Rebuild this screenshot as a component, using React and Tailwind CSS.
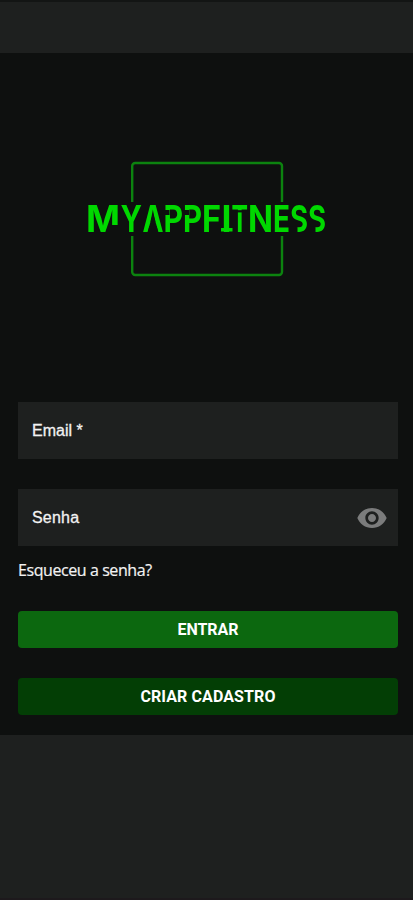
import React, { useState } from 'react';
import { MdVisibility } from 'react-icons/md';

// left edge and advance of every letter in the wordmark
const letters = [
  { char: 'M', x: 86, width: 34 },
  { char: 'Y', x: 120.5, width: 21.5 },
  { char: 'A', x: 142.5, width: 21 },
  { char: 'P', x: 163.5, width: 19.5 },
  { char: 'P', x: 183, width: 19 },
  { char: 'F', x: 202, width: 19 },
  { char: 'I', x: 221.5, width: 10 },
  { char: 'T', x: 231.5, width: 16.5 },
  { char: 'N', x: 248, width: 25 },
  { char: 'E', x: 273, width: 17 },
  { char: 'S', x: 290, width: 18 },
  { char: 'S', x: 308, width: 18 },
];

const Logo = () => (
  <svg width="250" height="116" viewBox="82 161 250 116" role="img" aria-label="MyAppFitness">
    <mask id="stencil" maskUnits="userSpaceOnUse" x="80" y="190" width="260" height="60">
      <rect x="80" y="190" width="260" height="60" fill="white" />
      <g fill="black">
        <path d="M112 225h8v9h-8z" />
        <path d="M153 213l-5.7 20h11.4z" />
        <path d="M163 210h6.5v5h-6.5z" />
        <path d="M182.5 210h6.5v5h-6.5z" />
        <path d="M233 210.2h15v2.2h-15z" />
        <path d="M289.5 221.5h8v12h-8z" />
        <path d="M307.5 221.5h8v12h-8z" />
      </g>
    </mask>
    <g fill="none" stroke="#0c830f" strokeWidth="2.4">
      <path d="M132.2 202V166a3 3 0 0 1 3-3H279a3 3 0 0 1 3 3V202" />
      <path d="M132.2 236V272a3 3 0 0 0 3 3H279a3 3 0 0 0 3-3V236" />
    </g>
    <g mask="url(#stencil)" fill="#00d800">
      <text y="231.5" className="font-['Inter',sans-serif] text-[37px] font-bold">
        {letters.map(({ char, x, width }, i) => (
          <tspan key={i} x={x} textLength={width} lengthAdjust="spacingAndGlyphs">{char}</tspan>
        ))}
      </text>
      <rect x="221" y="228" width="11.5" height="3.5" />
    </g>
  </svg>
);

const Login = () => {
  const [email, setEmail] = useState('');
  const [password, setPassword] = useState('');
  const [showPassword, setShowPassword] = useState(false);

  return (
    <main className="h-[682px] bg-[#0e100f] pl-[18px] pr-[15px] pt-[108px]">
      <div className="flex justify-center h-[241px] pr-[2px]">
        <Logo />
      </div>

      <form onSubmit={(e) => e.preventDefault()}>
        <input
          type="email"
          aria-label="Email"
          value={email}
          onChange={(e) => setEmail(e.target.value)}
          placeholder="Email *"
          className="block w-full h-[57px] px-[14px] bg-[#1e201f] text-base text-[#f2f2f2] placeholder:text-[#f2f2f2] [-webkit-text-stroke:0.3px_#f2f2f2] outline-none"
        />

        <div className="mt-[30px] h-[57px] flex items-center bg-[#1e201f] pr-[10px]">
          <input
            type={showPassword ? 'text' : 'password'}
            aria-label="Senha"
            value={password}
            onChange={(e) => setPassword(e.target.value)}
            placeholder="Senha"
            className="flex-1 min-w-0 h-full px-[14px] text-base tracking-[0.2px] text-[#f2f2f2] placeholder:text-[#f2f2f2] [-webkit-text-stroke:0.3px_#f2f2f2] outline-none"
          />
          <button type="button" aria-label="Mostrar senha" onClick={() => setShowPassword(!showPassword)}>
            <MdVisibility size={32} className="text-[#7b7c7c]" />
          </button>
        </div>

        <a href="#" className="block mt-3 h-6 leading-6 text-base tracking-[-0.42px] text-[#f2f2f2] font-['Open_Sans',sans-serif] [-webkit-text-stroke:0.2px_#f2f2f2]">
          Esqueceu a senha?
        </a>

        <button
          type="submit"
          className="block w-full h-[37px] mt-[29px] rounded-[4px] bg-[#0c680f] text-white text-base font-bold font-['Roboto',sans-serif]"
        >
          ENTRAR
        </button>
        <button
          type="button"
          className="block w-full h-[37px] mt-[30px] rounded-[4px] bg-[#033e05] text-white text-base font-bold tracking-[0.1px] font-['Roboto',sans-serif]"
        >
          CRIAR CADASTRO
        </button>
      </form>
    </main>
  );
};

export default function App() {
  return (
    <div className="relative h-[900px] w-full overflow-hidden bg-[#1e201f] border-t-2 border-t-[#131514] border-b-2 border-b-[#1d191c] pt-[51px] font-['Liberation_Sans',sans-serif]">
      <Login />
      <span className="absolute -top-[2px] right-0 w-[5px] h-[2px] bg-[#e0e0e0]" />
    </div>
  );
}
